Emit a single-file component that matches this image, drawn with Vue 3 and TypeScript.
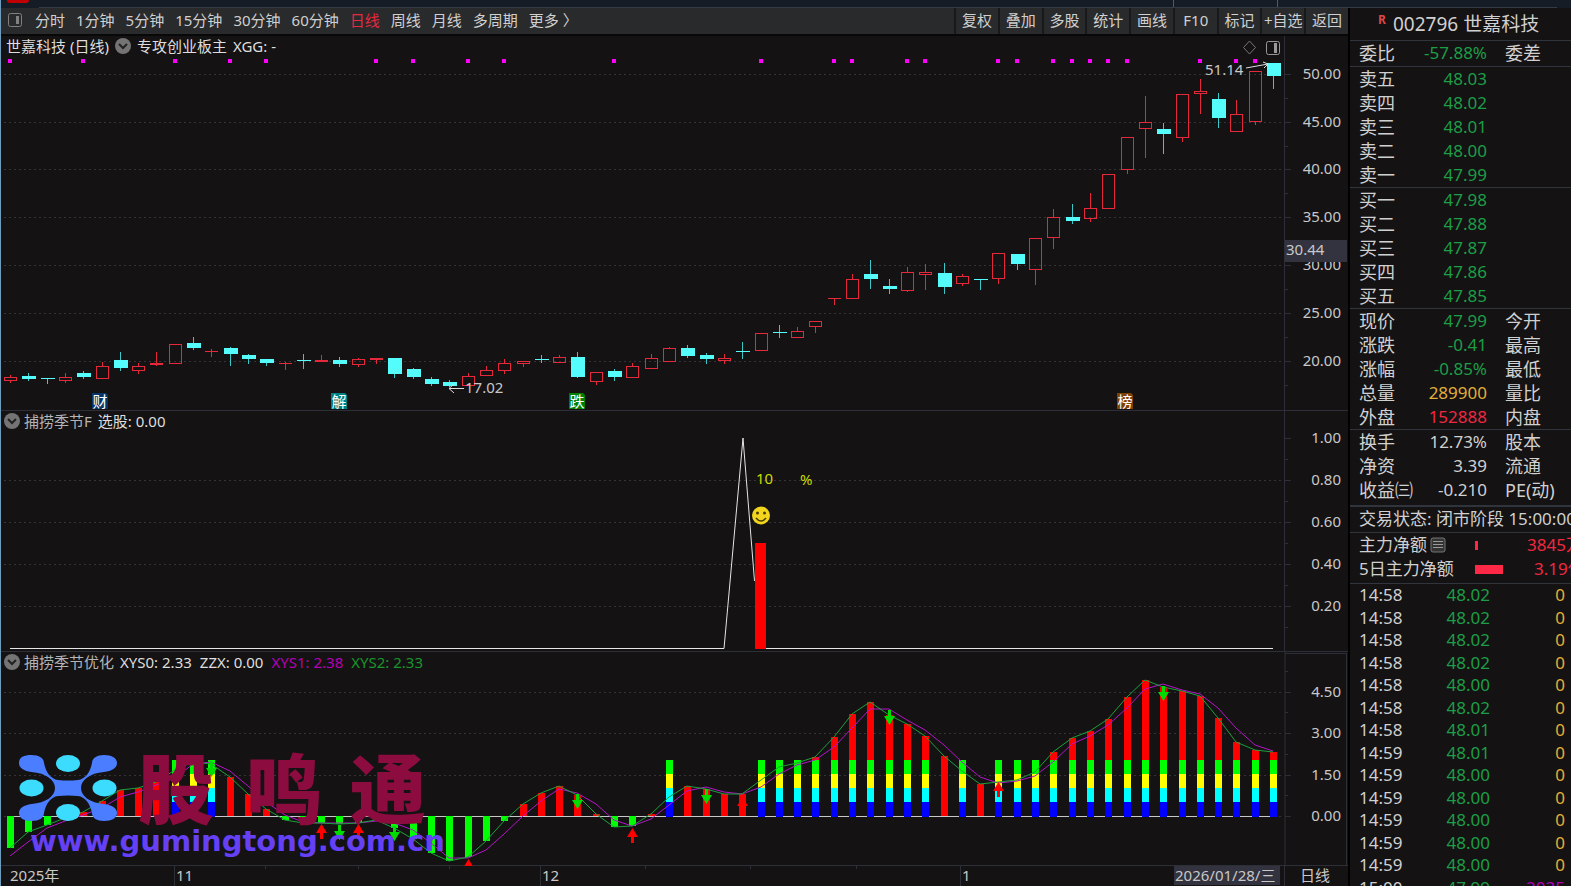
<script setup lang="ts">
type Candle = [number, number, number, number, number]

const periods = ['分时', '1分钟', '5分钟', '15分钟', '30分钟', '60分钟', '日线', '周线', '月线', '多周期', '更多 〉']
const tools = ['复权', '叠加', '多股', '统计', '画线', 'F10', '标记', '+自选', '返回']

const x = (i: number) => Math.round(10 + i * 18.305)

// direction (1 rising, 0 falling), high, body top, body bottom, low
const candles: Candle[] = [
  [1, 375, 377, 380, 382], [0, 373, 376, 379, 380], [0, 378, 378, 379, 383], [1, 373, 377, 380, 382],
  [0, 371, 373, 377, 378], [1, 362, 366, 378, 378], [0, 352, 360, 368, 370], [1, 363, 366, 370, 373],
  [1, 352, 363, 364, 365], [1, 344, 344, 363, 363], [0, 337, 343, 348, 349], [1, 349, 351, 351, 356],
  [0, 347, 348, 354, 365], [0, 354, 355, 359, 363], [0, 359, 359, 363, 365], [1, 362, 363, 363, 369],
  [0, 354, 360, 361, 368], [1, 355, 360, 361, 361], [0, 357, 360, 364, 366], [1, 358, 359, 364, 366],
  [1, 358, 358, 359, 363], [0, 358, 358, 374, 377], [0, 368, 369, 377, 378], [0, 377, 379, 384, 385],
  [0, 380, 382, 386, 386], [1, 373, 376, 385, 385], [1, 366, 370, 375, 375], [1, 359, 363, 370, 373],
  [1, 361, 361, 363, 366], [0, 355, 359, 360, 362], [1, 355, 357, 362, 362], [0, 352, 357, 377, 377],
  [1, 372, 372, 381, 384], [0, 369, 371, 377, 380], [1, 363, 366, 377, 377], [1, 354, 358, 368, 368],
  [1, 347, 348, 361, 361], [0, 345, 348, 356, 357], [0, 353, 355, 359, 363], [1, 354, 358, 360, 363],
  [0, 342, 351, 352, 358], [1, 333, 333, 350, 350], [0, 325, 332, 333, 337], [1, 327, 331, 337, 337],
  [1, 321, 321, 326, 332], [1, 298, 298, 298, 304], [1, 274, 279, 298, 298], [0, 260, 274, 279, 288],
  [0, 279, 286, 289, 293], [1, 267, 272, 290, 291], [1, 264, 272, 274, 289], [0, 263, 273, 287, 293],
  [1, 274, 276, 283, 285], [0, 279, 279, 280, 289], [1, 253, 253, 278, 283], [0, 254, 254, 264, 269],
  [1, 238, 238, 269, 284], [1, 209, 217, 237, 248], [0, 204, 217, 221, 223], [1, 193, 208, 218, 221],
  [1, 174, 174, 208, 208], [1, 137, 137, 169, 173], [1, 96, 122, 128, 157], [0, 123, 129, 134, 153],
  [1, 94, 94, 137, 141], [1, 79, 91, 93, 113], [0, 93, 99, 118, 127], [1, 100, 114, 131, 131],
  [1, 71, 71, 121, 124], [0, 63, 63, 76, 88],
]
const dots = [0, 4, 9, 12, 14, 20, 22, 25, 27, 33, 41, 45, 46, 49, 50, 54, 55, 57, 58, 59, 60, 61, 65, 67, 68]
const priceAxis = [
  { y: 74, t: '50.00' }, { y: 122, t: '45.00' }, { y: 169, t: '40.00' }, { y: 217, t: '35.00' },
  { y: 265, t: '30.00' }, { y: 313, t: '25.00' }, { y: 361, t: '20.00' },
]
const badges = [
  { x: 92, t: '财', c: '#063469' }, { x: 331, t: '解', c: '#008080' },
  { x: 569, t: '跌', c: '#008000' }, { x: 1117, t: '榜', c: '#804000' },
]
const ratioAxis = [
  { y: 438, t: '1.00' }, { y: 480, t: '0.80' }, { y: 522, t: '0.60' }, { y: 564, t: '0.40' }, { y: 606, t: '0.20' },
]
const waveAxis = [{ y: 692, t: '4.50' }, { y: 733, t: '3.00' }, { y: 775, t: '1.50' }, { y: 816, t: '0.00' }]

const fast = [
  848, 832, 825, 818, 812, 801, 790, 788, 782, 770, 762, 764, 777, 794, 809, 820, 823, 823, 824, 823,
  820, 828, 839, 853, 861, 857, 841, 821, 804, 793, 786, 795, 814, 827, 826, 814, 797, 786, 789, 794,
  794, 780, 767, 763, 757, 737, 714, 702, 715, 724, 736, 756, 771, 784, 782, 780, 772, 752, 738, 731,
  719, 697, 680, 687, 691, 696, 718, 742, 750, 752,
]
const slow = [
  856, 842, 828, 821, 815, 808, 797, 792, 785, 778, 764, 762, 771, 786, 802, 815, 822, 823, 823, 823,
  821, 823, 830, 843, 858, 858, 850, 834, 816, 801, 789, 793, 804, 820, 826, 819, 805, 791, 787, 792,
  794, 787, 774, 765, 760, 747, 728, 709, 709, 720, 730, 745, 762, 777, 783, 781, 776, 762, 744, 736,
  725, 708, 689, 684, 690, 694, 708, 728, 745, 751,
]
const line = (v: number[]) => v.map((y, i) => `${x(i)},${y}`).join(' ')
const stacked = (i: number) => (i >= 9 && i <= 11) || i === 36 || (i >= 41 && i <= 50) || i === 52 || i >= 54
const layers = [
  { y: 760, h: 14, c: '#00ff00' }, { y: 774, h: 14, c: '#ffff00' },
  { y: 788, h: 14, c: '#00ffff' }, { y: 802, h: 15, c: '#0000ff' },
]
const stacks = fast.map((_, i) => i).filter(stacked)
const bars = fast
  .map((y, i) => ({ i, y: Math.min(y, 816), h: Math.abs(816 - y), c: y < 816 ? '#ff0000' : '#00ff00' }))
  .filter(b => !stacked(b.i) || b.y < 760)
const down = [[11, 762], [18, 825], [21, 826], [31, 794], [38, 789], [48, 710], [63, 686]]
const up = [[17, 824], [19, 824], [25, 859], [34, 828], [40, 797], [54, 782]]

const months = [{ x: 174, t: '11' }, { x: 540, t: '12' }, { x: 960, t: '1' }]
const weeks = [265, 358, 449, 645, 750, 856]

const asks = [['卖五', '48.03'], ['卖四', '48.02'], ['卖三', '48.01'], ['卖二', '48.00'], ['卖一', '47.99']]
const bids = [['买一', '47.98'], ['买二', '47.88'], ['买三', '47.87'], ['买四', '47.86'], ['买五', '47.85']]
const quotes = [
  ['现价', '47.99', 'green', '今开'], ['涨跌', '-0.41', 'green', '最高'], ['涨幅', '-0.85%', 'green', '最低'],
  ['总量', '289900', 'yellow', '量比'], ['外盘', '152888', 'red', '内盘'],
]
const basics = [['换手', '12.73%', '', '股本'], ['净资', '3.39', '', '流通'], ['收益㈢', '-0.210', '', 'PE(动)']]
const ticks = [
  ['14:58', '48.02', '0'], ['14:58', '48.02', '0'], ['14:58', '48.02', '0'], ['14:58', '48.02', '0'],
  ['14:58', '48.00', '0'], ['14:58', '48.02', '0'], ['14:58', '48.01', '0'], ['14:59', '48.01', '0'],
  ['14:59', '48.00', '0'], ['14:59', '48.00', '0'], ['14:59', '48.00', '0'], ['14:59', '48.00', '0'],
  ['14:59', '48.00', '0'], ['15:00', '47.99', '2035'],
]
</script>

<template>
  <div class="app">
    <header class="strip">
      <i class="brand"></i>
      <i class="strip-line"></i>
      <i class="strip-tabs"></i>
    </header>

    <div class="body">
      <main class="main">
        <nav class="toolbar">
          <button class="icon-btn" aria-label="侧栏">
            <svg width="16" height="16" viewBox="0 0 16 16">
              <rect x="1.5" y="1.5" width="13" height="13" rx="2" fill="none" stroke="#808080" />
              <rect x="9" y="4" width="3" height="8" fill="#808080" />
            </svg>
          </button>
          <div class="periods">
            <button v-for="p in periods" :key="p" :class="{ active: p === '日线' }">{{ p }}</button>
          </div>
          <div class="tools">
            <button v-for="t in tools" :key="t">{{ t }}</button>
          </div>
        </nav>

        <section class="panel">
          <h2 class="caption first">
            <span>世嘉科技 (日线)</span>
            <svg class="chev" viewBox="0 0 16 16"><circle cx="8" cy="8" r="8" /><path d="M4 6l4 4 4-4" /></svg>
            <span>专攻创业板主</span><span>XGG: -</span>
          </h2>
          <svg class="chart" viewBox="1 36 1347 375">
            <g class="grid">
              <line v-for="a in priceAxis" :key="a.t" x1="4" x2="1281" :y1="a.y + 0.5" :y2="a.y + 0.5" />
            </g>
            <g class="frame">
              <path d="M1284.5 36V411M1 410.5H1348" />
              <path v-for="a in priceAxis" :key="a.t" :d="`M1285 ${a.y + 0.5}h6M1285 ${a.y + 24.5}h3`" />
            </g>
            <rect v-for="d in dots" :key="d" :x="x(d) - 2" y="59" width="4" height="4" fill="#ff00ff" />
            <g v-for="(c, i) in candles" :key="i" :class="c[0] ? 'rise' : 'fall'" shape-rendering="crispEdges">
              <path :d="`M${x(i) + 0.5} ${c[1]}V${c[2]}M${x(i) + 0.5} ${c[3]}V${c[4] + 0.5}`" />
              <rect v-if="c[0]" :x="x(i) - 5.5" :y="c[2] + 0.5" width="12" :height="Math.max(c[3] - c[2], 0.1)" />
              <rect v-else :x="x(i) - 6" :y="c[2]" width="14" :height="c[3] - c[2]" />
            </g>
            <path class="pointer" d="M1246 68L1268 64M1263 62L1268 64L1264 68M464 388.5H449M454 384L449 388.5L454 393" />
            <text class="note" x="1205" y="75">51.14</text>
            <text class="note" x="465" y="393">17.02</text>
            <g v-for="b in badges" :key="b.t">
              <path :d="`M${b.x} 393h14l2 2v14h-16z`" :fill="b.c" />
              <text class="badge" :x="b.x + 8" y="407">{{ b.t }}</text>
            </g>
            <path d="M1249.5 41L1255.5 47.5L1249.5 54L1243.5 47.5Z" fill="none" stroke="#777" />
            <rect x="1266.5" y="41.5" width="13" height="13" rx="2" fill="none" stroke="#999" />
            <rect x="1274" y="43" width="3" height="10" fill="#999" />
            <text v-for="a in priceAxis" :key="a.t" class="tick" x="1341" :y="a.y + 5">{{ a.t }}</text>
            <rect x="1285" y="240" width="62" height="22" fill="#33333f" />
            <text class="note" x="1286" y="255">30.44</text>
          </svg>
        </section>

        <section class="panel">
          <h2 class="caption">
            <svg class="chev" viewBox="0 0 16 16"><circle cx="8" cy="8" r="8" /><path d="M4 6l4 4 4-4" /></svg>
            <span class="dim">捕捞季节F</span><span>选股: 0.00</span>
          </h2>
          <svg class="chart" viewBox="1 411 1347 241">
            <g class="grid">
              <line v-for="a in ratioAxis.slice(1)" :key="a.t" x1="4" x2="1281" :y1="a.y + 0.5" :y2="a.y + 0.5" />
            </g>
            <g class="frame">
              <path d="M1284.5 411V652M1 651.5H1348" />
              <path v-for="a in ratioAxis" :key="a.t" :d="`M1285 ${a.y + 0.5}h6M1285 ${a.y + 21.5}h3`" />
            </g>
            <path d="M10 648.5H724L743 438L754.5 581M766 648.5H1273" fill="none" stroke="#e6e6e6" />
            <rect x="755" y="543" width="11" height="106" fill="#ff0000" />
            <text class="percent" x="756" y="484">10</text>
            <text class="percent" x="800" y="485">%</text>
            <circle cx="761" cy="515.5" r="9" fill="#f2d51c" />
            <circle cx="757.5" cy="513" r="1.5" fill="#4a3d00" />
            <circle cx="764.5" cy="513" r="1.5" fill="#4a3d00" />
            <path d="M756 518Q761 524 766 518" fill="none" stroke="#4a3d00" stroke-width="1.5" />
            <text v-for="a in ratioAxis" :key="a.t" class="tick" x="1341" :y="a.y + 5">{{ a.t }}</text>
          </svg>
        </section>

        <section class="panel">
          <h2 class="caption wide">
            <svg class="chev" viewBox="0 0 16 16"><circle cx="8" cy="8" r="8" /><path d="M4 6l4 4 4-4" /></svg>
            <span class="dim">捕捞季节优化</span><span>XYS0: 2.33</span><span>ZZX: 0.00</span>
            <span class="violet">XYS1: 2.38</span><span class="leaf">XYS2: 2.33</span>
          </h2>
          <svg class="chart" viewBox="1 652 1347 214">
            <g class="grid">
              <line v-for="a in waveAxis" :key="a.t" x1="4" x2="1281" :y1="a.y + 0.5" :y2="a.y + 0.5" />
            </g>
            <g class="frame">
              <path d="M1285 652V866M1346.5 653V866M1285 653.5H1347M1 865.5H1348" />
              <path v-for="a in waveAxis" :key="a.t" :d="`M1285 ${a.y + 0.5}h6M1285 ${a.y - 20.5}h3`" />
            </g>
            <path d="M8 816.5H1276" stroke="#c8c8c8" />
            <g v-for="b in bars" :key="b.i">
              <rect :x="x(b.i) - 3" :y="b.y" width="7" :height="b.h" :fill="b.c" />
            </g>
            <g v-for="s in stacks" :key="s">
              <rect v-for="l in layers" :key="l.y" :x="x(s) - 3" :y="l.y" width="7" :height="l.h" :fill="l.c" />
            </g>
            <polyline :points="line(slow)" fill="none" stroke="#b414c8" />
            <polyline :points="line(fast)" fill="none" stroke="#1ca03c" />
            <path v-for="d in down" :key="d[0]" fill="#00dc00"
              :d="`M${x(d[0]) - 1} ${d[1]}h3v6h4l-5.5 9l-5.5 -9h4z`" />
            <path v-for="u in up" :key="u[0]" fill="#ff0000"
              :d="`M${x(u[0]) + 0.5} ${u[1]}l5.5 9h-4v6h-3v-6h-4z`" />
            <g class="logo">
              <path fill="#4a7dff" d="M19 763C19 757 24 755 31.5 755C39 755 44 758 44 763C46 773 51 779 58 780Q68 781 78 780C85 779 90 773 92 763C92 758 97 755 104 755C112 755 117 758 117 763C117 768 112 771 104 772C90 773 81 780 81 788C81 796 90 803 104 804C112 805 117 808 117 813C117 818 112 821 104 821C97 821 92 818 92 813C90 803 85 797 78 796Q68 795 58 796C51 797 46 803 44 813C44 818 39 821 31.5 821C24 821 19 818 19 813C19 808 24 805 31.5 804C46 803 55 796 55 788C55 780 46 773 31.5 772C24 771 19 768 19 763Z" />
              <g fill="#3cdcff">
                <ellipse cx="68" cy="763.5" rx="12" ry="8.5" />
                <ellipse cx="31.5" cy="788" rx="12" ry="8.5" />
                <ellipse cx="104.5" cy="788" rx="12" ry="8.5" />
                <ellipse cx="68" cy="812.5" rx="12" ry="8.5" />
              </g>
            </g>
            <g class="mark">
              <text x="176" y="818">股</text><text x="284" y="818">鸣</text><text x="388" y="818">通</text>
            </g>
            <text class="site" x="30" y="851">www.gumingtong.com.cn</text>
            <text v-for="a in waveAxis" :key="a.t" class="tick" x="1341" :y="a.y + 5">{{ a.t }}</text>
          </svg>
        </section>

        <svg class="chart" viewBox="1 866 1347 20">
          <g class="frame">
            <path v-for="m in months" :key="m.t" :d="`M${m.x + 0.5} 866v20`" />
            <path v-for="w in weeks" :key="w" :d="`M${w + 0.5} 866v3`" />
            <path d="M1284.5 866v20" />
          </g>
          <text class="note" x="10" y="881">2025年</text>
          <text v-for="m in months" :key="m.t" class="note" :x="m.x + 2" y="881">{{ m.t }}</text>
          <rect x="1174" y="866" width="106" height="19" fill="#33333f" />
          <text class="note" x="1175" y="881">2026/01/28/三</text>
          <text class="note" x="1300" y="881">日线</text>
        </svg>
      </main>

      <aside class="side">
        <h1 class="name"><sup>R</sup>002796 世嘉科技</h1>
        <div class="block tight">
          <div class="row"><span>委比</span><b class="green">-57.88%</b><span>委差</span></div>
        </div>
        <div class="block">
          <div v-for="r in asks" :key="r[0]" class="row"><span>{{ r[0] }}</span><b class="green">{{ r[1] }}</b></div>
        </div>
        <div class="block">
          <div v-for="r in bids" :key="r[0]" class="row"><span>{{ r[0] }}</span><b class="green">{{ r[1] }}</b></div>
        </div>
        <div class="block">
          <div v-for="r in quotes" :key="r[0]" class="row">
            <span>{{ r[0] }}</span><b :class="r[2]">{{ r[1] }}</b><span>{{ r[3] }}</span>
          </div>
        </div>
        <div class="block basics">
          <div v-for="r in basics" :key="r[0]" class="row">
            <span>{{ r[0] }}</span><b>{{ r[1] }}</b><span>{{ r[3] }}</span>
          </div>
        </div>
        <div class="status">交易状态: 闭市阶段 15:00:00</div>
        <div class="flows">
          <div class="flow">
            <span>主力净额<svg class="memo" viewBox="0 0 16 16">
              <rect x="1" y="1" width="14" height="14" rx="2" fill="#333" stroke="#777" />
              <path d="M3 4.5h10M3 7.5h10M3 10.5h10" stroke="#999" />
            </svg></span>
            <i class="meter small"></i><b class="red">3845万</b>
          </div>
          <div class="flow"><span>5日主力净额</span><i class="meter"></i><b class="red shift">3.19亿</b></div>
        </div>
        <table class="ticks">
          <tbody>
            <tr v-for="(t, i) in ticks" :key="i">
              <td>{{ t[0] }}</td><td class="green">{{ t[1] }}</td>
              <td :class="t[2] === '0' ? 'yellow' : 'violet'">{{ t[2] }}</td>
            </tr>
          </tbody>
        </table>
      </aside>
    </div>
  </div>
</template>

<style>
body { margin: 0; background: #141213; overflow: hidden; }
</style>

<style scoped>
.app {
  box-sizing: border-box;
  height: 100vh;
  overflow: hidden;
  display: flex;
  flex-direction: column;
  border-left: 1px solid #6f9dbd;
  background: #141213;
  color: #d0d0d0;
  font-family: "Noto Sans", "Noto Sans CJK SC", sans-serif;
  font-size: 15px;
}
.strip { position: relative; height: 8px; flex: none; background: #161c26; }
.brand { position: absolute; left: 6px; top: 0; width: 22px; height: 3px; border-radius: 0 0 4px 4px; background: #c00000; }
.strip-line { position: absolute; left: 38px; right: 14px; bottom: 0; height: 1px; background: #353b44; }
.strip-tabs { position: absolute; right: 293px; top: 0; width: 103px; height: 7px; border: solid #55585f; border-width: 0 1px; }
.body { flex: 1; min-height: 0; display: grid; grid-template-columns: minmax(0, 1fr) 223px; }
.main { display: flex; flex-direction: column; min-width: 0; }
button { border: 0; padding: 0; background: none; color: inherit; font: inherit; white-space: nowrap; cursor: pointer; }
.toolbar { display: flex; align-items: stretch; flex: none; height: 26px; line-height: 24px; background: #292a2c; border-bottom: 2px solid #080808; }
.toolbar button { padding-bottom: 2px; }
.icon-btn { width: 28px; display: grid; place-items: center; margin-right: 6px; }
.periods { display: flex; gap: 11px; flex: 1; }
.periods .active { color: #e62840; }
.tools { display: grid; grid-template-columns: repeat(9, 1fr); width: 394px; }
.tools button { border-left: 2px solid #18191b; overflow: hidden; }
.panel { position: relative; flex: none; }
.chart { display: block; width: 100%; height: auto; flex: none; }
.caption { position: absolute; left: 3px; top: 0; height: 20px; display: flex; align-items: center; gap: 6px; margin: 0; font-size: 15px; font-weight: 400; line-height: 20px; white-space: nowrap; }
.caption.wide { gap: 8px; }
.caption.wide .dim { margin: 0 -2px 0 -4px; }
.caption span { color: #dedede; }
.caption .dim { color: #b4b4b4; margin-left: -2px; }
.caption .violet, .violet { color: #b400b4; }
.caption .leaf { color: #18962c; }
.chev { width: 16px; height: 16px; flex: none; }
.caption.first { left: 5px; }
.chev circle { fill: #747474; }
.chev path { fill: none; stroke: #222; stroke-width: 2; }
.grid line { stroke: #343436; stroke-dasharray: 2 3; }
.frame path { fill: none; stroke: #2c2f38; }
.rise path, .rise rect { fill: none; stroke: #e6283c; }
.fall path { fill: none; stroke: #3cc8c8; }
.fall rect { fill: #54fcfc; }
.pointer { fill: none; stroke: #ddd; }
.note, .tick { font-size: 15px; fill: #c8c8c8; }
.tick { text-anchor: end; }
.percent { font-size: 15px; fill: #c8dc00; }
.badge { font-size: 15px; fill: #fff; text-anchor: middle; }
.mark text { font-size: 76px; font-weight: 900; fill: #8c0c40; text-anchor: middle; }
.site { font-family: "DejaVu Sans", sans-serif; font-weight: 700; font-size: 29px; fill: #6540f5; }
.side { border-left: 2px solid #000; overflow: hidden; white-space: nowrap; font-size: 18px; }
.side b { font-weight: 400; font-size: 17px; }
.name { height: 32px; margin: 0; padding-left: 28px; font-size: 19px; line-height: 32px; font-weight: 400; }
.name sup { display: inline-block; width: 15px; font-size: 12px; line-height: 12px; font-weight: 700; color: #dc4646; }
.block { border-top: 1px solid #30343d; }
.tight { padding-bottom: 1px; }
.basics { padding-bottom: 3px; }
.row { display: grid; grid-template-columns: 60px 68px 1fr; height: 24px; line-height: 24px; padding-left: 9px; }
.row b { text-align: right; }
.row span:last-child { padding-left: 18px; }
.green { color: #1c9e46; }
.yellow { color: #e0b038; }
.red { color: #f02840; }
.status { border-top: 2px solid #30343d; padding-left: 9px; height: 25px; line-height: 24px; font-size: 17px; }
.flows { border-top: 1px solid #30343d; border-bottom: 1px solid #30343d; height: 50px; }
.flow { display: grid; grid-template-columns: 116px 52px 1fr; align-items: center; height: 24px; line-height: 24px; padding-left: 9px; font-size: 17px; }
.memo { width: 16px; height: 16px; margin-left: 3px; vertical-align: -2px; }
.meter { width: 28px; height: 9px; background: #ff2846; }
.meter.small { width: 3px; }
.flow .shift { padding-left: 7px; }
.ticks { width: 100%; border-collapse: collapse; table-layout: fixed; font-size: 17px; }
.ticks tr { height: 22px; }
.ticks tr:nth-child(even) { height: 23px; }
.ticks td { padding: 0; line-height: 22px; }
.ticks td:first-child { width: 78px; padding-left: 9px; }
.ticks td:nth-child(2) { width: 53px; text-align: right; }
.ticks td:last-child { text-align: right; padding-right: 6px; }
</style>
